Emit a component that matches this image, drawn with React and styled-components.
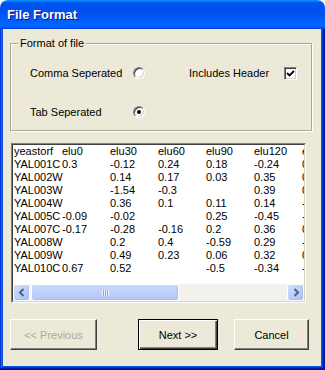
import React from 'react'
import styled, { createGlobalStyle } from 'styled-components'

const GlobalStyle = createGlobalStyle`
  html, body {
    margin: 0;
    padding: 0;
    background: #fff;
  }
  body {
    font-family: "Liberation Sans", Arial, sans-serif;
  }
`

const ui = {
  Window: styled.div`
    width: 325px;
    height: 370px;
    display: flex;
    flex-direction: column;
    border-radius: 8px 8px 0 0;
    overflow: hidden;
  `,
  TitleBar: styled.div`
    height: 29px;
    flex: none;
    display: flex;
    align-items: center;
    padding-left: 7px;
    background: linear-gradient(
      to bottom,
      #0997ff 0%,
      #0053ee 10%,
      #0050ee 40%,
      #0066ff 86%,
      #005bff 94%,
      #003dd7 100%
    );
    color: #fff;
    font: bold 13px "Liberation Sans", Arial, sans-serif;
    text-shadow: 1px 1px #0f1089;
  `,
  Frame: styled.div`
    flex: 1;
    display: flex;
    min-height: 0;
    padding: 0 4px 4px 3px;
    background: #0855dd;
    box-shadow: inset -1px -1px #00138c, inset 1px 0 #0831d9,
      inset -2px -2px #001ea0, inset 2px 0 #166aee,
      inset -3px -3px #003bda, inset 3px 0 #0855dd;
  `,
  Body: styled.div`
    flex: 1;
    min-width: 0;
    display: flex;
    flex-direction: column;
    background: #ece9d8;
    font-size: 11px;
    color: #000;
  `,
  GroupBox: styled.div`
    position: relative;
    box-sizing: border-box;
    height: 88px;
    margin: 14px 9px 0 7px;
    padding: 19px 0 0 19px;
    border: 1px solid #aca899;
    box-shadow: inset 1px 1px #fff, 1px 1px #fff;
  `,
  Caption: styled.span`
    position: absolute;
    top: -7px;
    left: 7px;
    padding: 0 2px;
    line-height: 13px;
    background: #ece9d8;
  `,
  Options: styled.div`
    display: grid;
    grid-template-columns: 103px 56px 95px 13px;
    grid-template-rows: 20px 20px;
    row-gap: 19px;
    align-items: center;
  `,
  Label: styled.span`
    line-height: 13px;
    white-space: nowrap;
  `,
  Radio: styled.span`
    box-sizing: border-box;
    width: 12px;
    height: 12px;
    border-radius: 50%;
    border: 1px solid;
    border-color: #808080 #fff #fff #808080;
    background: #fff;
    box-shadow: inset 1px 1px #404040, inset -1px -1px #d4d0c8;
    display: flex;
    align-items: center;
    justify-content: center;
    &::after {
      content: '';
      display: ${p => (p.$checked ? 'block' : 'none')};
      width: 4px;
      height: 4px;
      border-radius: 50%;
      background: #000;
    }
  `,
  Checkbox: styled.span`
    box-sizing: border-box;
    width: 13px;
    height: 13px;
    border: 1px solid;
    border-color: #808080 #fff #fff #808080;
    background: #fff;
    box-shadow: inset 1px 1px #404040, inset -1px -1px #d4d0c8;
    display: flex;
    align-items: center;
    justify-content: center;
  `,
  TextBox: styled.div`
    height: 158px;
    min-width: 0;
    margin: 12px 15px 0 8px;
    border: 1px solid;
    border-color: #808080 #fff #fff #808080;
    display: flex;
  `,
  TextInner: styled.div`
    flex: 1;
    display: flex;
    flex-direction: column;
    min-width: 0;
    border: 1px solid;
    border-color: #404040 #d4d0c8 #d4d0c8 #404040;
    background: #fff;
  `,
  Data: styled.div`
    flex: 1;
    min-height: 0;
    overflow: hidden;
    padding-left: 1px;
    font-size: 11px;
    line-height: 13px;
  `,
  Row: styled.div`
    display: grid;
    grid-template-columns: repeat(7, 48px);
    white-space: nowrap;
  `,
  Scrollbar: styled.div`
    height: 17px;
    flex: none;
    display: flex;
    align-items: stretch;
    background: #f3f1ec;
  `,
  ArrowButton: styled.div`
    box-sizing: border-box;
    width: 17px;
    flex: none;
    display: flex;
    align-items: center;
    justify-content: center;
    border: 1px solid #fff;
    border-radius: 3px;
    background: linear-gradient(135deg, #d2defd 0%, #bccdf8 55%, #aec3f3 100%);
    box-shadow: inset -1px -1px #a6bbe9;
  `,
  Track: styled.div`
    flex: 1;
    min-width: 0;
    display: flex;
    padding-left: 1px;
  `,
  Thumb: styled.div`
    box-sizing: border-box;
    width: 148px;
    display: flex;
    align-items: center;
    justify-content: center;
    border: 1px solid #fff;
    border-radius: 3px;
    background: linear-gradient(to bottom, #c9d8fc 0%, #bed0fa 50%, #b4c8f6 100%);
    box-shadow: inset -1px -1px #a6bbe9;
  `,
  Grip: styled.div`
    width: 7px;
    height: 6px;
    background: repeating-linear-gradient(
      to right,
      #eef3fe 0 1px,
      #8ca6dc 1px 2px
    );
  `,
  Buttons: styled.div`
    display: flex;
    margin-top: 16px;
    padding-left: 7px;
  `,
  Button: styled.button`
    box-sizing: border-box;
    width: ${p => p.$width}px;
    height: 31px;
    margin: 0 0 0 ${p => p.$gap || 0}px;
    padding: 0;
    font: 11px "Liberation Sans", Arial, sans-serif;
    color: #000;
    background: #ece9d8;
    border: 1px solid;
    border-color: ${p => (p.$default ? '#000' : '#fff #404040 #404040 #fff')};
    box-shadow: ${p =>
      p.$default
        ? 'inset 1px 1px #fff, inset -1px -1px #404040, inset -2px -2px #808080'
        : 'inset -1px -1px #808080'};
    &:disabled {
      color: #aca899;
    }
  `,
}

const rows = [
  ['yeastorf', 'elu0', 'elu30', 'elu60', 'elu90', 'elu120', 'elu150'],
  ['YAL001C', '0.3', '-0.12', '0.24', '0.18', '-0.24', '0.07'],
  ['YAL002W', '', '0.14', '0.17', '0.03', '0.35', '0.12'],
  ['YAL003W', '', '-1.54', '-0.3', '', '0.39', '0.21'],
  ['YAL004W', '', '0.36', '0.1', '0.11', '0.14', '-0.1'],
  ['YAL005C', '-0.09', '-0.02', '', '0.25', '-0.45', '-0.2'],
  ['YAL007C', '-0.17', '-0.28', '-0.16', '0.2', '0.36', '0.15'],
  ['YAL008W', '', '0.2', '0.4', '-0.59', '0.29', '-0.3'],
  ['YAL009W', '', '0.49', '0.23', '0.06', '0.32', '0.08'],
  ['YAL010C', '0.67', '0.52', '', '-0.5', '-0.34', '-0.1'],
]

const Chevron = ({ dir }) => (
  <svg width="8" height="9" viewBox="0 0 8 9">
    <path
      d={dir === 'left' ? 'M5.5 1 L2 4.5 L5.5 8' : 'M2.5 1 L6 4.5 L2.5 8'}
      fill="none"
      stroke="#4d6185"
      strokeWidth="2"
    />
  </svg>
)

const App = () => (
  <>
    <GlobalStyle />
    <ui.Window>
      <ui.TitleBar>File Format</ui.TitleBar>
      <ui.Frame>
        <ui.Body>
          <ui.GroupBox>
            <ui.Caption>Format of file</ui.Caption>
            <ui.Options>
              <ui.Label>Comma Seperated</ui.Label>
              <ui.Radio />
              <ui.Label>Includes Header</ui.Label>
              <ui.Checkbox>
                <svg width="9" height="9" viewBox="0 0 9 9">
                  <path d="M1 4 L3.5 6.5 L8 2" fill="none" stroke="#000" strokeWidth="1.8" />
                </svg>
              </ui.Checkbox>
              <ui.Label>Tab Seperated</ui.Label>
              <ui.Radio $checked />
            </ui.Options>
          </ui.GroupBox>

          <ui.TextBox>
            <ui.TextInner>
              <ui.Data>
                {rows.map((cells, i) => (
                  <ui.Row key={i}>
                    {cells.map((c, j) => <span key={j}>{c}</span>)}
                  </ui.Row>
                ))}
              </ui.Data>
              <ui.Scrollbar>
                <ui.ArrowButton><Chevron dir="left" /></ui.ArrowButton>
                <ui.Track>
                  <ui.Thumb><ui.Grip /></ui.Thumb>
                </ui.Track>
                <ui.ArrowButton><Chevron dir="right" /></ui.ArrowButton>
              </ui.Scrollbar>
            </ui.TextInner>
          </ui.TextBox>

          <ui.Buttons>
            <ui.Button $width={87} disabled>&lt;&lt; Previous</ui.Button>
            <ui.Button $width={80} $gap={41} $default>Next &gt;&gt;</ui.Button>
            <ui.Button $width={75} $gap={16}>Cancel</ui.Button>
          </ui.Buttons>
        </ui.Body>
      </ui.Frame>
    </ui.Window>
  </>
)

export default App
